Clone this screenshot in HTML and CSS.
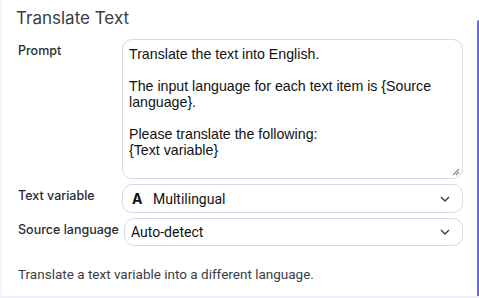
FILE: index.html
```html
<html>

<head>
    <title>Translate Text</title>
    <link rel="stylesheet" href="styles.css">
</head>

<body>
    <div class="frame">
        <div class="panel">
            <div class="title">Translate Text</div>
            <div class="form">
                <div class="label">Prompt</div>
                <div class="prompt">
                    <div>Translate the text into English.</div>
                    <div>&nbsp;</div>
                    <div>The input language for each text item is {Source language}.</div>
                    <div>&nbsp;</div>
                    <div>Please translate the following:</div>
                    <div>{Text variable}</div>
                    <svg class="grip" width="8" height="8" viewBox="0 0 8 8">
                        <path d="M7 1 L1 7 M7 4 L4 7" stroke="#8a8d99" stroke-width="1.2" fill="none"/>
                    </svg>
                </div>
                <div class="label">Text variable</div>
                <div class="select">
                    <span class="glyph">A</span>
                    <span class="value">Multilingual</span>
                    <svg class="chev" width="10" height="6" viewBox="0 0 10 6">
                        <path d="M1 1 L5 5 L9 1" stroke="#3a3d4a" stroke-width="1.4" fill="none"/>
                    </svg>
                </div>
                <div class="label">Source language</div>
                <div class="select second">
                    <span class="value">Auto-detect</span>
                    <svg class="chev" width="10" height="6" viewBox="0 0 10 6">
                        <path d="M1 1 L5 5 L9 1" stroke="#3a3d4a" stroke-width="1.4" fill="none"/>
                    </svg>
                </div>
            </div>
            <div class="desc">Translate a text variable into a different language.</div>
        </div>
        <div class="edge"></div>
    </div>
</body>

</html>
```

FILE: styles.css
```css
body {
    margin: 0;
    background-color: #f3f5fa;
    font-family: Roboto, "Liberation Sans", sans-serif;
    color: #1f1f24;
}

.frame {
    display: flex;
    height: 296px;
    margin-left: 2px;
    background-color: #ffffff;
    border-bottom: 1px solid #eceef3;
}

.panel {
    flex: 1;
    padding: 6px 14px 0 14px;
}

.edge {
    width: 2px;
    margin-top: 20px;
    background-color: #6a6de0;
    border-radius: 2px 0 0 0;
}

.title {
    font-family: Inter, "Noto Sans", sans-serif;
    font-size: 17px;
    color: #3b3d44;
    height: 26px;
    line-height: 24px;
}

.form {
    display: grid;
    grid-template-columns: 106px 1fr;
    row-gap: 5px;
    margin-top: 7px;
}

.label {
    font-family: Inter, "Noto Sans", sans-serif;
    font-size: 12.5px;
    font-weight: 500;
    color: #2a2c33;
    padding-left: 2px;
    padding-top: 4px;
}

.prompt {
    position: relative;
    height: 124px;
    border: 1px solid #d6d8e4;
    border-radius: 10px;
    padding: 6px 8px 8px 6px;
    font-family: "Liberation Sans", Arial, sans-serif;
    font-size: 14.2px;
    line-height: 16px;
    color: #111;
}

.grip {
    position: absolute;
    right: 2px;
    bottom: 2px;
}

.select {
    display: flex;
    align-items: center;
    height: 27px;
    border: 1px solid #d6d8e4;
    border-radius: 10px;
    padding: 0 12px 0 9px;
    font-size: 14px;
    color: #111;
}

.select.second {
    height: 26px;
    margin-left: 2px;
    padding-left: 6px;
}

.glyph {
    font-family: Inter, "Noto Sans", sans-serif;
    font-weight: 700;
    font-size: 14px;
    width: 21px;
}

.value {
    flex: 1;
}

.desc {
    font-size: 13.5px;
    color: #3b3d44;
    margin-top: 20px;
    padding-left: 2px;
}
```
